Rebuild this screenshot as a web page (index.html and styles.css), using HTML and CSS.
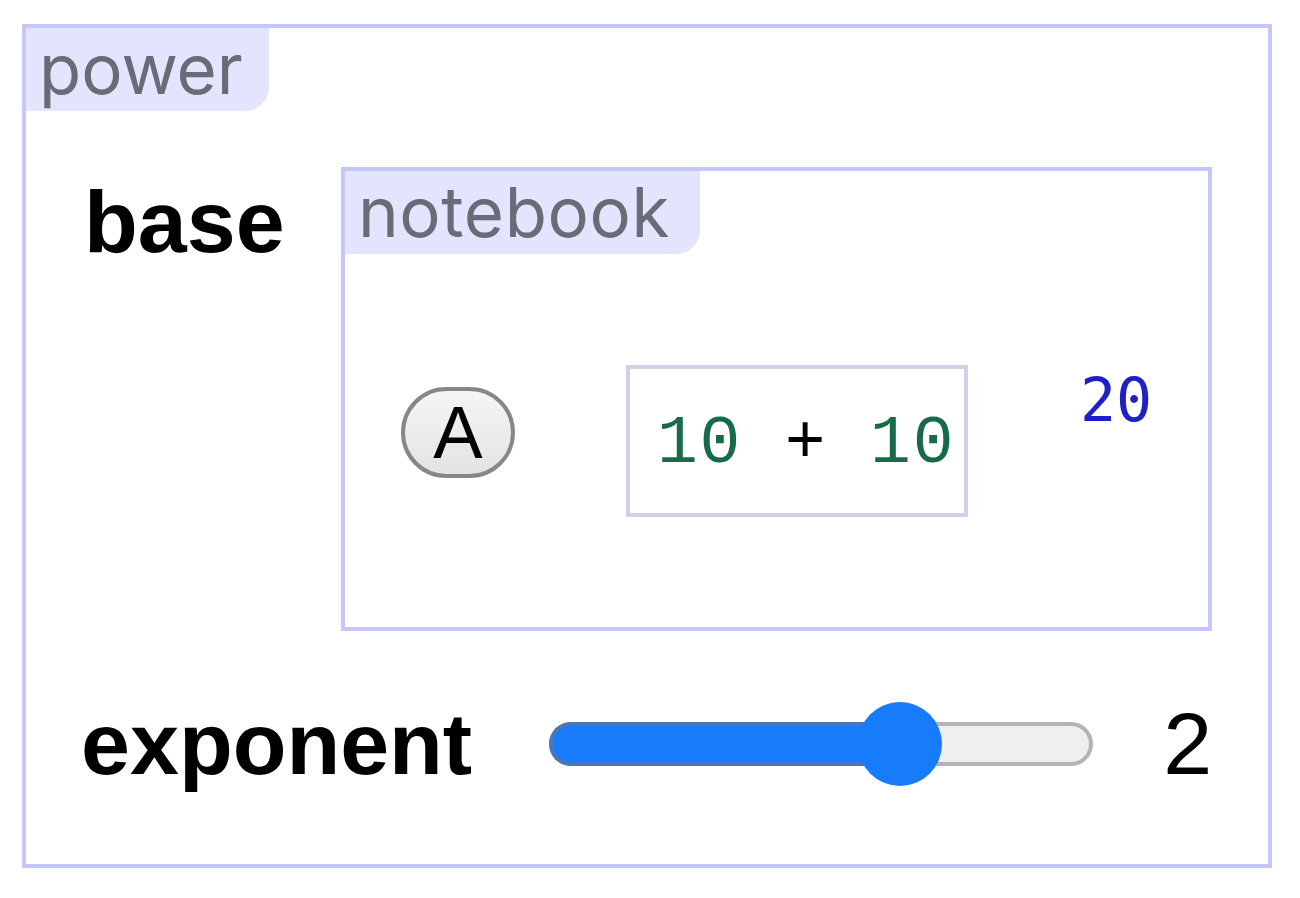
FILE: index.html
```html
<!DOCTYPE html>
<html>
<head>
<meta charset="utf-8">
<link rel="stylesheet" href="styles.css">
</head>
<body>
<div class="frame">
  <div class="tag">power</div>
  <div class="row row-base">
    <div class="label label-base">base</div>
    <div class="notebook">
      <div class="tag tag-wide">notebook</div>
      <div class="cells">
        <button class="btn">A</button>
        <div class="code"><span class="num">10</span><span class="op"> + </span><span class="num">10</span></div>
        <div class="out">20</div>
      </div>
    </div>
  </div>
  <div class="row row-exp">
    <div class="label">exponent</div>
    <div class="slider">
      <div class="track">
        <div class="fill" style="width: 351px"></div>
        <div class="thumb" style="left: 351px"></div>
      </div>
    </div>
    <div class="value">2</div>
  </div>
</div>
</body>
</html>
```
FILE: styles.css
```css
* { box-sizing: border-box; }
html, body { margin: 0; padding: 0; background: #ffffff; }
body { font-family: "Liberation Sans", Arial, sans-serif; }

.frame {
  margin: 24px 0 0 22px;
  width: 1250px;
  height: 844px;
  border: 4px solid #c5c7fb;
  display: flex;
  flex-direction: column;
  align-items: flex-start;
}

.tag {
  height: 83px;
  background: #e3e4fd;
  color: #6b6b78;
  font-family: Inter, "Noto Sans", sans-serif;
  font-size: 69px;
  line-height: 83px;
  padding: 0 26px 0 13px;
  border-bottom-right-radius: 24px;
  white-space: nowrap;
}
.tag-wide { letter-spacing: 0.6px; padding-right: 30px; }

.row { display: flex; padding-left: 56px; }
.row-base { margin-top: 56px; align-items: flex-start; }
.row-exp { margin-top: 62px; align-items: center; padding-left: 55px; }

.label {
  font-weight: bold;
  font-size: 88px;
  color: #000;
}
.label-base { padding-top: 4px; width: 259px; padding-left: 2px; }

.notebook {
  width: 871px;
  height: 464px;
  border: 4px solid #c5c7fb;
  display: flex;
  flex-direction: column;
  align-items: flex-start;
}

.cells {
  display: flex;
  align-items: flex-start;
  margin-top: 111px;
  padding-left: 56px;
}

.btn {
  margin-top: 22px;
  width: 114px;
  height: 91px;
  border: 4px solid #878787;
  border-radius: 46px;
  background: linear-gradient(#f5f5f5, #e3e3e3);
  font-family: "Liberation Sans", Arial, sans-serif;
  font-size: 74px;
  color: #000;
  padding: 0;
  display: flex;
  align-items: center;
  justify-content: center;
  line-height: 1;
}

.code {
  margin-left: 111px;
  width: 342px;
  height: 152px;
  border: 4px solid #cfd1e8;
  display: flex;
  align-items: center;
  padding-left: 27px;
  padding-top: 4px;
  font-family: "Liberation Mono", "Courier New", monospace;
  font-size: 68px;
  letter-spacing: 1.8px;
  white-space: pre;
}
.num { color: #186b49; }
.op { color: #000; }

.out {
  margin-left: 112px;
  font-family: "DejaVu Sans Mono", monospace;
  font-size: 60px;
  color: #2020c8;
}

.slider {
  margin-left: 77px;
  width: 544px;
  height: 86px;
  display: flex;
  align-items: center;
}
.track {
  position: relative;
  width: 544px;
  height: 44px;
  border: 4px solid #b4b4b4;
  background: #efefef;
  border-radius: 22px;
}
.fill {
  position: absolute;
  left: -4px;
  top: -4px;
  height: 44px;
  background: #177cfb;
  border: 4px solid #4878ba;
  border-right: none;
  border-radius: 22px 0 0 22px;
}
.thumb {
  position: absolute;
  top: 50%;
  width: 84px;
  height: 84px;
  margin-left: -46px;
  margin-top: -42px;
  border-radius: 50%;
  background: #177cfb;
}

.value {
  margin-left: 70px;
  font-size: 88px;
  color: #000;
}
```
